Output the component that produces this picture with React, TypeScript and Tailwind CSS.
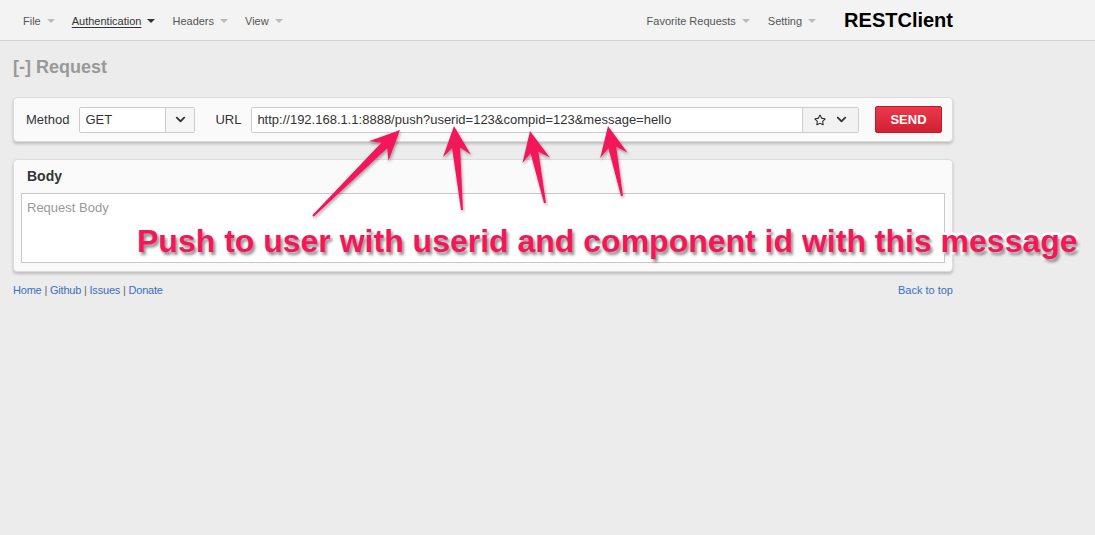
import { FaChevronDown, FaRegStar } from 'react-icons/fa';

const navLeft = ['File', 'Authentication', 'Headers', 'View'];
const navRight = ['Favorite Requests', 'Setting'];

function Caret({ dark }: { dark?: boolean }) {
  return (
    <span
      className={`ml-[6px] inline-block h-0 w-0 border-x-[4px] border-t-[4px] border-x-transparent ${
        dark ? 'border-t-[#333]' : 'border-t-[#bbb]'
      }`}
    />
  );
}

function NavItem({ label }: { label: string }) {
  const active = label === 'Authentication';
  return (
    <span className="flex items-center">
      <span className={active ? 'text-[#333] underline underline-offset-2' : 'text-[#555]'}>{label}</span>
      <Caret dark={active} />
    </span>
  );
}

// annotation arrows drawn over the page
function Arrows() {
  const arrows = [
    { x1: 313, y1: 216, x2: 400, y2: 130 },
    { x1: 462, y1: 210, x2: 454, y2: 126 },
    { x1: 545, y1: 203, x2: 530, y2: 131 },
    { x1: 622, y1: 196, x2: 608, y2: 126 },
  ];
  return (
    <svg className="pointer-events-none absolute left-0 top-0" width={1095} height={535}>
      <defs>
        <filter id="sh" x="-20%" y="-20%" width="140%" height="140%">
          <feDropShadow dx="1" dy="2" stdDeviation="1.5" floodColor="#000" floodOpacity="0.35" />
        </filter>
      </defs>
      {arrows.map((a, i) => {
        const dx = a.x2 - a.x1;
        const dy = a.y2 - a.y1;
        const len = Math.hypot(dx, dy);
        const ux = dx / len;
        const uy = dy / len;
        const px = -uy;
        const py = ux;
        const head = 30;
        const bx = a.x2 - ux * head;
        const by = a.y2 - uy * head;
        const nx = a.x2 - ux * (head - 8);
        const ny = a.y2 - uy * (head - 8);
        const pts = [
          [a.x1 + px * 1, a.y1 + py * 1],
          [nx + px * 4, ny + py * 4],
          [bx + px * 14, by + py * 14],
          [a.x2, a.y2],
          [bx - px * 14, by - py * 14],
          [nx - px * 4, ny - py * 4],
          [a.x1 - px * 1, a.y1 - py * 1],
        ]
          .map((p) => p.join(','))
          .join(' ');
        return <polygon key={i} points={pts} fill="#f3175a" filter="url(#sh)" />;
      })}
    </svg>
  );
}

export default function App() {
  return (
    <div className="relative h-[535px] w-[1095px] overflow-hidden bg-[#ececec] font-['Liberation_Sans',Arial,sans-serif]">
      {/* Navbar */}
      <div className="h-[41px] border-b border-[#d2d2d2] bg-[#f3f3f3]">
        <div className="flex h-[40px] w-[953px] items-center pt-[2px] text-[11px]">
          <div className="flex items-center gap-[17px] pl-[23px]">
            {navLeft.map((l) => (
              <NavItem key={l} label={l} />
            ))}
          </div>
          <div className="ml-auto flex items-center gap-[18px]">
            {navRight.map((l) => (
              <NavItem key={l} label={l} />
            ))}
            <span className="ml-[10px] -mt-[2px] text-[20px] font-bold text-black">RESTClient</span>
          </div>
        </div>
      </div>

      <div className="ml-[13px] w-[940px]">
        <h1 className="mt-[14px] text-[18px] font-bold leading-[24px] text-[#999]">[-] Request</h1>

        {/* Request bar */}
        <div className="mt-[18px] flex h-[45px] items-center rounded-[4px] border border-[#dcdcdc] bg-[#fafafa] pl-[12px] pr-[10px] shadow-[0_2px_3px_rgba(0,0,0,0.2)]">
          <span className="text-[13px] text-[#333]">Method</span>
          <div className="ml-[10px] flex h-[26px] w-[116px] rounded-[2px] border border-[#ccc] bg-white">
            <span className="flex flex-1 items-center pl-[5px] text-[13px] text-[#333]">GET</span>
            <span className="flex w-[29px] items-center justify-center border-l border-[#ccc] bg-[#f6f6f6]">
              <FaChevronDown className="text-[11px] text-[#333]" />
            </span>
          </div>
          <span className="ml-[20px] text-[13px] text-[#333]">URL</span>
          <div className="ml-[10px] flex h-[26px] w-[608px] rounded-[2px] border border-[#ccc] bg-white">
            <span className="flex flex-1 items-center pl-[5px] text-[13px] text-[#333]">
              http://192.168.1.1:8888/push?userid=123&amp;compid=123&amp;message=hello
            </span>
            <span className="flex w-[56px] items-center justify-center gap-[10px] border-l border-[#ccc] bg-[#f2f2f2]">
              <FaRegStar className="text-[12px] text-[#222]" />
              <FaChevronDown className="text-[11px] text-[#333]" />
            </span>
          </div>
          <button className="ml-auto h-[27px] w-[67px] rounded-[2px] border border-[#c4182a] bg-gradient-to-b from-[#e9394a] to-[#d21f31] text-[13px] font-bold text-white">
            SEND
          </button>
        </div>

        {/* Body panel */}
        <div className="mt-[17px] h-[113px] rounded-[4px] border border-[#dcdcdc] bg-[#fafafa] px-[7px] pt-[8px] shadow-[0_2px_3px_rgba(0,0,0,0.2)]">
          <div className="pl-[6px] text-[14px] font-bold leading-[17px] text-[#333]">Body</div>
          <div className="mt-[8px] h-[70px] border border-[#c8c8c8] bg-white px-[5px] pt-[4px] text-[13px] text-[#999]">
            Request Body
          </div>
        </div>

        {/* Footer */}
        <div className="mt-[10px] flex justify-between text-[11px] text-[#3a6fc4]">
          <span className="tracking-[-0.2px]">
            Home<span className="text-[#666]"> | </span>Github<span className="text-[#666]"> | </span>Issues
            <span className="text-[#666]"> | </span>Donate
          </span>
          <span>Back to top</span>
        </div>
      </div>

      <Arrows />

      {/* Annotation */}
      <div className="absolute left-[137px] top-[222px] whitespace-nowrap text-[32px] font-bold leading-[38px] text-[#f3175a] [-webkit-text-stroke:5px_white] [paint-order:stroke_fill] [text-shadow:2px_3px_3px_rgba(0,0,0,0.45)]">
        Push to user with userid and component id with this message
      </div>
    </div>
  );
}
